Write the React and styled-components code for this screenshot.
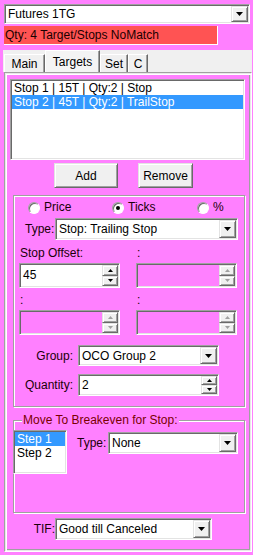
import React from "react";
import styled, { createGlobalStyle, css } from "styled-components";

const GlobalStyle = createGlobalStyle`
  html, body {
    margin: 0;
    padding: 0;
    background: #ff80ff;
  }
  body {
    font-family: "Liberation Sans", Arial, sans-serif;
    font-size: 12px;
    color: #000;
  }
`;

const LABEL = "#1a0008";

const sunken = css`
  border: 1px solid;
  border-color: #a0a0a0 #ffffff #ffffff #a0a0a0;
  box-shadow: inset 1px 1px 0 #696969, inset -1px -1px 0 #e3e3e3;
`;

const raised = css`
  border: 1px solid;
  border-color: #e3e3e3 #696969 #696969 #e3e3e3;
  box-shadow: inset 1px 1px 0 #ffffff, inset -1px -1px 0 #a0a0a0;
  background: #f0f0f0;
`;

const Window = styled.div`
  width: 253px;
  height: 555px;
  box-sizing: border-box;
  padding-top: 4px;
  display: flex;
  flex-direction: column;
  overflow: hidden;
`;

const ComboFrame = styled.div`
  display: flex;
  box-sizing: border-box;
  flex: none;
  width: ${(p) => p.$w}px;
  height: ${(p) => p.$h}px;
  padding: 1px;
  background: #fff;
  ${sunken}
`;

const ComboText = styled.div`
  flex: 1;
  display: flex;
  align-items: center;
  padding-left: 2px;
  white-space: nowrap;
  overflow: hidden;
  color: #000;
`;

const DropButton = styled.div`
  box-sizing: border-box;
  width: 17px;
  display: flex;
  align-items: center;
  justify-content: center;
  ${raised}
`;

const TopCombo = styled.div`
  margin-left: 4px;
`;

const RedBar = styled.div`
  margin: 2px 0 0 4px;
  box-sizing: border-box;
  width: 214px;
  height: 19px;
  padding-left: 1px;
  line-height: 18px;
  background: #ff5353;
  border-right: 1px solid #fff;
  border-bottom: 1px solid #fff;
  color: #1a0000;
  white-space: nowrap;
`;

const TabControl = styled.div`
  margin: 5px 0 0 3px;
  width: 249px;
  display: flex;
  flex-direction: column;
`;

const TabStrip = styled.div`
  display: flex;
  align-items: flex-end;
  height: 22px;
  padding-left: 1px;
  background: #f0f0f0;
`;

const Tab = styled.div`
  box-sizing: border-box;
  width: ${(p) => p.$w}px;
  height: ${(p) => (p.$active ? 22 : 18)}px;
  display: flex;
  align-items: center;
  justify-content: center;
  border-left: 1px solid #fff;
  border-top: 1px solid #fff;
  border-right: 1px solid #696969;
  box-shadow: inset -1px 0 0 #a0a0a0;
  background: ${(p) => (p.$active ? "#f4f4f4" : "#f0f0f0")};
  padding-top: ${(p) => (p.$active ? 0 : 1)}px;
  white-space: nowrap;
`;

const TabPage = styled.div`
  box-sizing: border-box;
  margin-left: 1px;
  width: 248px;
  height: 480px;
  padding: 2px;
  border: 1px solid;
  border-color: #a0a0a0 #ffffff #ffffff #a0a0a0;
  box-shadow: inset 1px 1px 0 #e8e8e8, inset 2px 2px 0 #ffffff,
    inset -1px -1px 0 #e8e8e8, inset -2px -2px 0 #a0a0a0;
  display: flex;
  flex-direction: column;
`;

const ListBox = styled.div`
  box-sizing: border-box;
  flex: none;
  width: ${(p) => p.$w}px;
  height: ${(p) => p.$h}px;
  padding: 1px;
  background: #fff;
  overflow: hidden;
  ${sunken}
`;

const ListItem = styled.div`
  height: 14px;
  line-height: 14px;
  padding-left: 2px;
  white-space: nowrap;
  background: ${(p) => (p.$selected ? "#3399ff" : "transparent")};
  color: ${(p) => (p.$selected ? "#fff" : "#000")};
`;

const TargetList = styled(ListBox)`
  margin: 4px 0 0 3px;
`;

const ButtonRow = styled.div`
  display: flex;
  margin-top: 3px;
  padding-left: 47px;
  gap: 20px;
`;

const Button = styled.button`
  box-sizing: border-box;
  width: ${(p) => p.$w}px;
  height: 25px;
  padding: 0;
  font: inherit;
  color: #000;
  ${raised}
`;

const GroupBox = styled.div`
  position: relative;
  box-sizing: border-box;
  flex: none;
  margin: ${(p) => p.$top}px 0 0 6px;
  width: 232px;
  height: ${(p) => p.$h}px;
  border: 1px solid #a0a0a0;
  box-shadow: inset 1px 1px 0 #ffffff, 1px 1px 0 #ffffff;
  display: flex;
  flex-direction: column;
`;

const Caption = styled.div`
  position: absolute;
  top: -8px;
  left: 8px;
  padding: 0 1px;
  line-height: 14px;
  background: #ff80ff;
  color: #7a0000;
  white-space: nowrap;
`;

const RadioRow = styled.div`
  display: grid;
  grid-template-columns: 84px 85px auto;
  margin-top: 5px;
  padding-left: 14px;
  height: 13px;
`;

const RadioItem = styled.label`
  display: flex;
  align-items: center;
  gap: 4px;
  color: ${LABEL};
  line-height: 13px;
`;

const RadioDot = styled.span`
  box-sizing: border-box;
  width: 12px;
  height: 12px;
  border-radius: 50%;
  border: 1px solid;
  border-color: #a0a0a0 #ffffff #ffffff #a0a0a0;
  box-shadow: inset 1px 1px 0 #696969;
  background: #fff;
  display: flex;
  align-items: center;
  justify-content: center;
  &::after {
    content: "";
    width: 4px;
    height: 4px;
    border-radius: 50%;
    background: ${(p) => (p.$checked ? "#000" : "transparent")};
  }
`;

const FieldRow = styled.div`
  display: flex;
  align-items: center;
  margin-top: ${(p) => p.$top}px;
  padding-left: ${(p) => p.$left || 0}px;
`;

const Label = styled.div`
  box-sizing: border-box;
  flex: none;
  width: ${(p) => p.$w}px;
  padding-right: ${(p) => p.$pr || 0}px;
  text-align: ${(p) => (p.$right ? "right" : "left")};
  color: ${LABEL};
  white-space: nowrap;
`;

const PairGrid = styled.div`
  display: grid;
  grid-template-columns: 101px 101px;
  column-gap: 16px;
  margin-top: ${(p) => p.$top}px;
  padding-left: 5px;
`;

const SmallLabel = styled.div`
  line-height: 14px;
  padding-left: 1px;
  color: ${LABEL};
  white-space: nowrap;
`;

const NumFrame = styled.div`
  display: flex;
  box-sizing: border-box;
  flex: none;
  width: ${(p) => p.$w}px;
  height: ${(p) => p.$h}px;
  padding: 1px;
  background: ${(p) => (p.$disabled ? "transparent" : "#fff")};
  ${sunken}
`;

const NumText = styled.div`
  flex: 1;
  display: flex;
  align-items: center;
  padding: 0 0 1px 2px;
  color: #000;
`;

const SpinCol = styled.div`
  width: 16px;
  display: flex;
  flex-direction: column;
`;

const SpinBtn = styled.div`
  box-sizing: border-box;
  flex: 1;
  display: flex;
  align-items: center;
  justify-content: center;
  ${raised}
`;

const BreakevenRow = styled.div`
  display: flex;
  align-items: flex-start;
  margin-top: 9px;
`;

const StepList = styled(ListBox)`
  margin-left: -1px;
`;

const TypeWrap = styled.div`
  display: flex;
  align-items: center;
  margin: 2px 0 0 10px;
`;

function DownArrow({ color = "#000" }) {
  return (
    <svg width="7" height="4" viewBox="0 0 7 4">
      <polygon points="0,0 7,0 3.5,4" fill={color} />
    </svg>
  );
}

function SpinArrow({ up, disabled }) {
  const color = disabled ? "#a0a0a0" : "#000";
  return (
    <svg width="5" height="3" viewBox="0 0 5 3">
      <polygon points={up ? "0,3 5,3 2.5,0" : "0,0 5,0 2.5,3"} fill={color} />
    </svg>
  );
}

function Combo({ w, h = 22, children }) {
  return (
    <ComboFrame $w={w} $h={h}>
      <ComboText>{children}</ComboText>
      <DropButton>
        <DownArrow />
      </DropButton>
    </ComboFrame>
  );
}

function Numeric({ w, h, value, disabled }) {
  return (
    <NumFrame $w={w} $h={h} $disabled={disabled}>
      <NumText>{value}</NumText>
      <SpinCol>
        <SpinBtn>
          <SpinArrow up disabled={disabled} />
        </SpinBtn>
        <SpinBtn>
          <SpinArrow disabled={disabled} />
        </SpinBtn>
      </SpinCol>
    </NumFrame>
  );
}

const targets = [
  { id: 1, text: "Stop 1 | 15T | Qty:2 | Stop" },
  { id: 2, text: "Stop 2 | 45T | Qty:2 | TrailStop", selected: true },
];

export default function App() {
  return (
    <Window>
      <GlobalStyle />
      <TopCombo>
        <Combo w={246} h={20}>
          Futures 1TG
        </Combo>
      </TopCombo>
      <RedBar>Qty: 4 Target/Stops NoMatch</RedBar>

      <TabControl>
        <TabStrip>
          <Tab $w={41}>Main</Tab>
          <Tab $w={55} $active>
            Targets
          </Tab>
          <Tab $w={28}>Set</Tab>
          <Tab $w={20}>C</Tab>
        </TabStrip>
        <TabPage>
          <TargetList $w={235} $h={81}>
            {targets.map((t) => (
              <ListItem key={t.id} $selected={t.selected}>
                {t.text}
              </ListItem>
            ))}
          </TargetList>

          <ButtonRow>
            <Button $w={64}>Add</Button>
            <Button $w={55}>Remove</Button>
          </ButtonRow>

          <GroupBox $top={7} $h={212}>
            <RadioRow>
              <RadioItem>
                <RadioDot />
                Price
              </RadioItem>
              <RadioItem>
                <RadioDot $checked />
                Ticks
              </RadioItem>
              <RadioItem>
                <RadioDot />%
              </RadioItem>
            </RadioRow>

            <FieldRow $top={4} $left={11}>
              <Label $w={30}>Type:</Label>
              <Combo w={183}>Stop: Trailing Stop</Combo>
            </FieldRow>

            <PairGrid $top={6}>
              <SmallLabel>Stop Offset:</SmallLabel>
              <SmallLabel>:</SmallLabel>
            </PairGrid>
            <PairGrid $top={3}>
              <Numeric w={101} h={25} value="45" />
              <Numeric w={101} h={25} disabled />
            </PairGrid>

            <PairGrid $top={5}>
              <SmallLabel>:</SmallLabel>
              <SmallLabel>:</SmallLabel>
            </PairGrid>
            <PairGrid $top={3}>
              <Numeric w={101} h={25} disabled />
              <Numeric w={101} h={25} disabled />
            </PairGrid>

            <FieldRow $top={10}>
              <Label $w={64} $pr={5} $right>
                Group:
              </Label>
              <Combo w={141} h={21}>
                OCO Group 2
              </Combo>
            </FieldRow>

            <FieldRow $top={8}>
              <Label $w={64} $pr={5} $right>
                Quantity:
              </Label>
              <Numeric w={141} h={22} value="2" />
            </FieldRow>
          </GroupBox>

          <GroupBox $top={13} $h={93}>
            <Caption>Move To Breakeven for Stop:</Caption>
            <BreakevenRow>
              <StepList $w={54} $h={44}>
                <ListItem $selected>Step 1</ListItem>
                <ListItem>Step 2</ListItem>
              </StepList>
              <TypeWrap>
                <Label $w={31}>Type:</Label>
                <Combo w={130}>None</Combo>
              </TypeWrap>
            </BreakevenRow>
          </GroupBox>

          <FieldRow $top={5} $left={26}>
            <Label $w={22} $right>
              TIF:
            </Label>
            <Combo w={157}>Good till Canceled</Combo>
          </FieldRow>
        </TabPage>
      </TabControl>
    </Window>
  );
}
